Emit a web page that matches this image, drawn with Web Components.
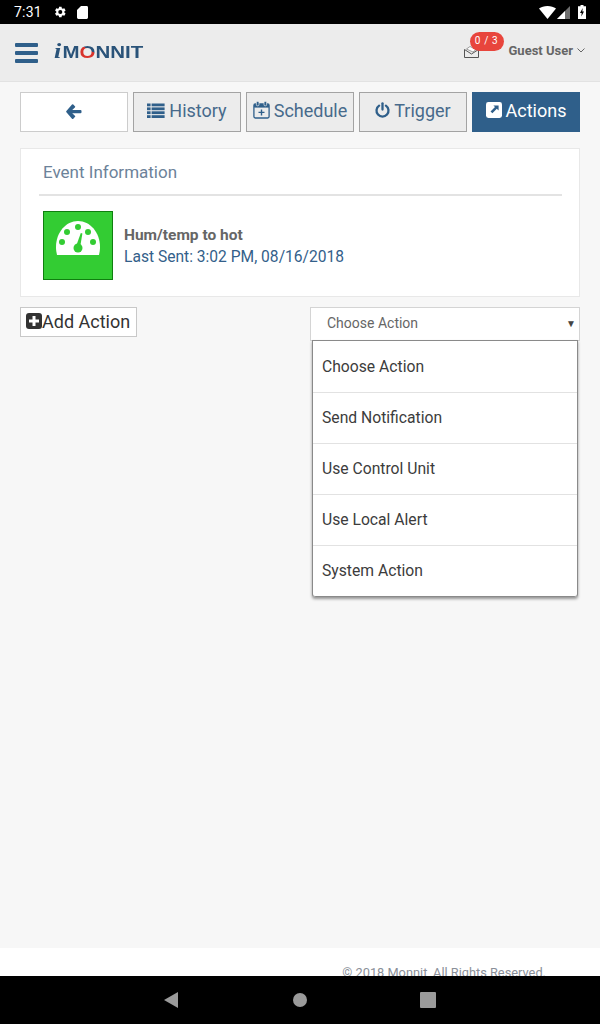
<!DOCTYPE html>
<html>
<head>
<meta charset="utf-8">
<title>Actions</title>
<style>
  html, body { margin: 0; padding: 0; }
  body { font-family: Roboto, "Liberation Sans", sans-serif; background: #f7f7f7; }
  .page { display: flex; flex-direction: column; height: 1024px; width: 600px; overflow: hidden; }
  .grow { flex: 1; }
</style>
</head>
<body>
<div class="page">
  <status-bar></status-bar>
  <top-header></top-header>
  <tool-bar>
    <tool-button kind="back" icon="back"></tool-button>
    <tool-button icon="list">History</tool-button>
    <tool-button icon="calendar">Schedule</tool-button>
    <tool-button icon="power">Trigger</tool-button>
    <tool-button kind="active" icon="share">Actions</tool-button>
  </tool-bar>
  <event-card></event-card>
  <action-row></action-row>
  <div class="grow"></div>
  <page-footer></page-footer>
  <nav-bar></nav-bar>
</div>

<script>
const icons = {
  back: '<svg width="16" height="15" viewBox="0 0 16 15"><path fill="#2f5f8a" d="M7.3.6 8.9 2.2a.9.9 0 0 1 0 1.3L6.2 5.9h8.3a1 1 0 0 1 1 1v1.4a1 1 0 0 1-1 1H6.2l2.7 2.5a.9.9 0 0 1 0 1.3l-1.6 1.6a.9.9 0 0 1-1.3 0L.4 8.2a.9.9 0 0 1 0-1.2L6 .6a.9.9 0 0 1 1.3 0z"/></svg>',
  list: '<svg width="18" height="15" viewBox="0 0 18 15"><g fill="#2f5f8a"><rect x="0" y="0.5" width="3.6" height="2.8"/><rect x="0" y="4.4" width="3.6" height="2.8"/><rect x="0" y="8.3" width="3.6" height="2.8"/><rect x="0" y="12.2" width="3.6" height="2.8"/><rect x="4.6" y="0.5" width="13" height="2.8"/><rect x="4.6" y="4.4" width="13" height="2.8"/><rect x="4.6" y="8.3" width="13" height="2.8"/><rect x="4.6" y="12.2" width="13" height="2.8"/></g></svg>',
  calendar: '<svg width="17" height="18" viewBox="0 0 17 18"><g fill="none" stroke="#2f5f8a" stroke-width="1.3"><rect x="0.9" y="3" width="15.2" height="14" rx="1.4"/></g><path fill="#2f5f8a" d="M1 3h15v3.6H1z"/><rect x="3.4" y="0.4" width="2.6" height="4.4" rx="1" fill="#2f5f8a" stroke="#ececec" stroke-width=".7"/><rect x="11" y="0.4" width="2.6" height="4.4" rx="1" fill="#2f5f8a" stroke="#ececec" stroke-width=".7"/><path fill="#2f5f8a" d="M7.8 8.4h1.4v2.3h2.3v1.4H9.2v2.3H7.8v-2.3H5.5v-1.4h2.3z"/></svg>',
  power: '<svg width="15" height="16" viewBox="0 0 15 16"><path fill="none" stroke="#2f5f8a" stroke-width="2.3" stroke-linecap="round" d="M4.1 3.6a6 6 0 1 0 6.8 0"/><path fill="none" stroke="#2f5f8a" stroke-width="2.3" stroke-linecap="round" d="M7.5 1.3v6.2"/></svg>',
  share: '<svg width="16" height="16" viewBox="0 0 16 16"><rect width="16" height="16" rx="2.4" fill="#fff"/><path fill="#2f5f8a" d="M7.4 3.4h5.2v5.2l-1.8-1.8-4.4 4.5-1.9-1.9 4.5-4.4z"/></svg>'
};

class StatusBar extends HTMLElement {
  constructor() {
    super();
    this.attachShadow({ mode: 'open' }).innerHTML = `
      <style>
        :host { display: flex; align-items: center; height: 24px; background: #000; color: #fff; padding: 0 14px; font: 400 14px Roboto, sans-serif; flex: none; }
        .time { margin-right: 1px; letter-spacing: .2px; }
        .left { display: flex; align-items: center; gap: 10px; flex: 1; }
        .right { display: flex; align-items: center; gap: 8px; }
        svg { display: block; }
      </style>
      <div class="left">
        <span class="time">7:31</span>
        <svg width="14" height="14" viewBox="0 0 24 24"><path fill="#fff" d="M19.4 13a7.5 7.5 0 0 0 0-2l2.2-1.7-2.2-3.7-2.6 1a7.5 7.5 0 0 0-1.7-1L14.7 3h-4.3l-.4 2.6a7.5 7.5 0 0 0-1.700 1l-2.600-1-2.100 3.700L5.700 11a7.500 7.500 0 0 0 0 2l-2.200 1.700 2.200 3.700 2.600-1a7.500 7.500 0 0 0 1.700 1l.4 2.600h4.300l.4-2.600a7.500 7.500 0 0 0 1.700-1l2.600 1 2.200-3.700zM12.500 15.500a3.500 3.500 0 1 1 0-7 3.500 3.500 0 0 1 0 7z"/></svg>
        <svg width="11" height="13" viewBox="0 0 11 13"><path fill="#fff" d="M4 0h5.600A1.400 1.400 0 0 1 11 1.400v10.200a1.400 1.400 0 0 1-1.400 1.400H1.400A1.400 1.400 0 0 1 0 11.600V4z"/></svg>
      </div>
      <div class="right">
        <svg width="17" height="13" viewBox="0 0 17 13"><path fill="#fff" d="M0 2.600C2.200 .9 5.200 0 8.500 0s6.300.9 8.500 2.600L8.500 13z"/></svg>
        <svg width="13" height="13" viewBox="0 0 13 13" style="margin-left:-7px"><path fill="#6e6e6e" d="M13 0v13H0z"/><path fill="#fff" d="M8 5.100V13H0z"/></svg>
        <svg width="8" height="14" viewBox="0 0 8 14"><path fill="#fff" d="M2.500 0h3v1.300H8V14H0V1.300h2.500z"/><path fill="#000" d="M4.700 3 2 8h1.700l-.4 3.500L6 6.500H4.300z"/></svg>
      </div>`;
  }
}

class TopHeader extends HTMLElement {
  constructor() {
    super();
    this.attachShadow({ mode: 'open' }).innerHTML = `
      <style>
        :host { display: flex; align-items: center; flex: none; height: 57px; background: #ececec; border-bottom: 1px solid #e2e2e2; padding: 0 15px; position: relative; }
        .burger { display: flex; flex-direction: column; gap: 4px; width: 23px; margin-top: 1px; }
        .burger i { display: block; height: 4px; background: #2f5f8a; border-radius: 1px; }
        .logo { margin: -3px 0 0 16px; font: 700 16.5px "Liberation Sans", sans-serif; color: #2a5379; transform: scaleX(1.24); transform-origin: left center; white-space: nowrap; }
        .logo em { font: italic 700 21px "Liberation Serif", serif; margin-right: 1px; }
        .logo b { background: linear-gradient(35deg, #d8332c 62%, #2a5379 62%); -webkit-background-clip: text; background-clip: text; color: transparent; }
        .spacer { flex: 1; }
        .mail { position: relative; width: 15px; height: 12px; margin-right: 30px; margin-top: -2px; }
        .mail svg { display: block; }
        .badge { position: absolute; left: 6px; top: -14px; width: 34px; height: 19px; border-radius: 10px; background: #e8453c; color: #fff; font-size: 10px; line-height: 18px; text-align: center; letter-spacing: .6px; }
        .user { font-size: 13px; font-weight: 700; color: #666; display: flex; align-items: center; gap: 4px; margin-top: -4px; }
      </style>
      <div class="burger"><i></i><i></i><i></i></div>
      <div class="logo"><em>i</em>M<b>O</b>NNIT</div>
      <div class="spacer"></div>
      <div class="mail">
        <svg width="15" height="12" viewBox="0 0 15 12"><path fill="none" stroke="#555" stroke-width="1" d="M.5 3.500v8h14v-8M.5 3.500 7.500 8l7-4.500"/><path fill="#fff" stroke="#777" stroke-width=".7" d="M2.500 3 6 .5l6 3-3 2.500z"/></svg>
        <span class="badge">0 / 3</span>
      </div>
      <div class="user">Guest User
        <svg width="8" height="5" viewBox="0 0 8 5"><path fill="none" stroke="#666" d="m.5.500 3.500 3.500L7.500.500"/></svg>
      </div>`;
  }
}

class ToolBar extends HTMLElement {
  constructor() {
    super();
    this.attachShadow({ mode: 'open' }).innerHTML = `
      <style>
        :host { display: flex; gap: 5px; flex: none; padding: 10px 20px 0; }
      </style>
      <slot></slot>`;
  }
}

class ToolButton extends HTMLElement {
  constructor() {
    super();
    this.attachShadow({ mode: 'open' }).innerHTML = `
      <style>
        :host { display: flex; align-items: center; justify-content: center; gap: 4px; box-sizing: border-box; width: 108px; height: 40px; padding-bottom: 4px; background: #ececec; border: 1px solid #a3a3a3; color: #476a8b; font-size: 18px; }
        :host([kind="back"]) { background: #fff; border-color: #ccc; padding-bottom: 1px; }
        :host([kind="active"]) { background: #2f5f8a; border-color: #2f5f8a; color: #fff; }
        svg { display: block; }
      </style>
      ${icons[this.getAttribute('icon')]}<slot></slot>`;
  }
}

class EventCard extends HTMLElement {
  constructor() {
    super();
    this.attachShadow({ mode: 'open' }).innerHTML = `
      <style>
        :host { display: block; flex: none; box-sizing: border-box; height: 149px; margin: 16px 20px 0; background: #fff; border: 1px solid #e8e8e8; padding: 0 17px 0 18px; }
        .title { height: 47px; box-sizing: border-box; border-bottom: 2px solid #e3e3e3; padding: 13px 0 0 4px; font-size: 17px; line-height: 20px; color: #6c8299; }
        .body { display: flex; align-items: center; gap: 11px; padding: 15px 0 0 4px; }
        .tile { box-sizing: border-box; width: 70px; height: 69px; background: #33cc33; border: 1px solid #0f7f0f; display: flex; justify-content: center; padding-top: 7px; }
        .name { font-size: 15.5px; line-height: 22px; font-weight: 700; color: #666; }
        .sent { font-size: 15.6px; line-height: 22px; color: #33608a; }
        svg { display: block; }
      </style>
      <div class="title">Event Information</div>
      <div class="body">
        <div class="tile">
          <svg width="44" height="36" viewBox="0 0 44 36">
            <path fill="#fff" d="M1 36C.3 33 0 30.500 0 28 0 13.500 9.800 2 22 2s22 11.500 22 26c0 2.500-.3 5-1 8z"/>
            <g fill="#33cc33">
              <circle cx="22" cy="8" r="3"/><circle cx="11" cy="13" r="3"/><circle cx="32" cy="13" r="3"/>
              <circle cx="6" cy="23" r="3"/><circle cx="37" cy="23" r="3"/>
              <circle cx="22" cy="29" r="4.500"/>
              <path d="M19.800 28 24.800 14l1.600.4L24 29z"/>
            </g>
          </svg>
        </div>
        <div>
          <div class="name">Hum/temp to hot</div>
          <div class="sent">Last Sent: 3:02 PM, 08/16/2018</div>
        </div>
      </div>`;
  }
}

class ActionRow extends HTMLElement {
  constructor() {
    super();
    this.attachShadow({ mode: 'open' }).innerHTML = `
      <style>
        :host { display: flex; justify-content: space-between; align-items: flex-start; flex: none; margin: 10px 20px 0; position: relative; }
        .add { display: flex; align-items: center; box-sizing: border-box; height: 30px; width: 117px; padding: 0 0 2px 5px; background: #fff; border: 1px solid #c8c8c8; color: #333; font-size: 18px; }
        svg { display: block; }
      </style>
      <div class="add">
        <svg width="16" height="16" viewBox="0 0 16 16"><rect width="16" height="16" rx="3" fill="#333"/><path fill="#fff" d="M6.500 3h3v3.500H13v3H9.500V13h-3V9.500H3v-3h3.500z"/></svg>Add Action
      </div>
      <action-select></action-select>`;
  }
}

class ActionSelect extends HTMLElement {
  constructor() {
    super();
    const options = ['Choose Action', 'Send Notification', 'Use Control Unit', 'Use Local Alert', 'System Action'];
    this.attachShadow({ mode: 'open' }).innerHTML = `
      <style>
        :host { display: block; position: relative; width: 270px; }
        .box { display: flex; align-items: center; justify-content: space-between; box-sizing: border-box; height: 34px; padding: 0 3px 2px 16px; background: #fff; border: 1px solid #d4d4d4; color: #666; font-size: 14px; }
        .arrow { font-size: 10px; color: #444; }
        .menu { position: absolute; left: 2px; top: 33px; width: 266px; box-sizing: border-box; background: #fff; border: 1px solid #8a8a8a; border-bottom: 0; border-radius: 0 0 3px 3px; box-shadow: 0 2px 3px rgba(0,0,0,.4); }
        .opt { box-sizing: border-box; height: 51px; padding: 0 9px 2px; display: flex; align-items: center; border-bottom: 1px solid #e2e2e2; font-size: 15.7px; color: #3c3c3c; }
        .opt:first-child { height: 52px; padding-bottom: 1px; }
        .opt:last-child { border-bottom: 1px solid #8a8a8a; border-radius: 0 0 3px 3px; }
      </style>
      <div class="box"><span>Choose Action</span><span class="arrow">&#9660;</span></div>
      <div class="menu">${options.map(o => `<div class="opt">${o}</div>`).join('')}</div>`;
  }
}

class PageFooter extends HTMLElement {
  constructor() {
    super();
    this.attachShadow({ mode: 'open' }).innerHTML = `
      <style>
        :host { display: block; flex: none; height: 28px; overflow: hidden; background: #fff; box-sizing: border-box; padding: 16px 54px 0 0; text-align: right; color: #8a8f99; font-size: 12.8px; line-height: 18px; }
      </style>
      &copy; 2018 Monnit, All Rights Reserved.`;
  }
}

class NavBar extends HTMLElement {
  constructor() {
    super();
    this.attachShadow({ mode: 'open' }).innerHTML = `
      <style>
        :host { display: flex; justify-content: center; align-items: center; flex: none; height: 48px; background: #000; box-sizing: border-box; }
        svg { display: block; }
        .home { margin: 0 113px 0 115px; }
      </style>
      <svg width="14" height="16" viewBox="0 0 14 16"><path fill="#9a9a9a" d="M14 0v16L0 8z"/></svg>
      <svg class="home" width="14" height="14" viewBox="0 0 14 14"><circle cx="7" cy="7" r="7" fill="#9a9a9a"/></svg>
      <svg width="16" height="16" viewBox="0 0 16 16"><rect width="16" height="16" rx="1" fill="#9a9a9a"/></svg>`;
  }
}

customElements.define('status-bar', StatusBar);
customElements.define('top-header', TopHeader);
customElements.define('tool-bar', ToolBar);
customElements.define('tool-button', ToolButton);
customElements.define('event-card', EventCard);
customElements.define('action-row', ActionRow);
customElements.define('action-select', ActionSelect);
customElements.define('page-footer', PageFooter);
customElements.define('nav-bar', NavBar);
</script>
</body>
</html>
